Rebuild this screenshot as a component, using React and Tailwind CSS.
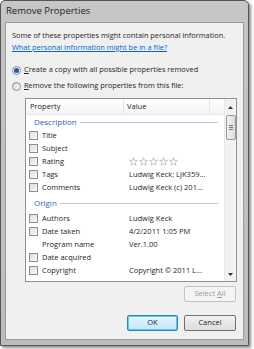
import React from 'react';

const font = { fontFamily: '"Open Sans", "Liberation Sans", sans-serif' };

const Check = () => (
  <span className="w-[9px] h-[9px] border border-[#8e8f8f] bg-gradient-to-br from-[#dcdcdc] to-[#fbfbfb] shrink-0" />
);

const Star = () => (
  <svg width="9" height="9" viewBox="0 0 10 10" className="shrink-0">
    <path d="M5 0.6 L6.2 3.7 L9.5 3.8 L6.9 5.9 L7.8 9.2 L5 7.3 L2.2 9.2 L3.1 5.9 L0.5 3.8 L3.8 3.7 Z" fill="#fbfbfb" stroke="#b4b4b4" strokeWidth="0.8" />
  </svg>
);

const rows1 = [
  { name: 'Title', value: '' },
  { name: 'Subject', value: '' },
  { name: 'Rating', value: 'stars' },
  { name: 'Tags', value: 'Ludwig Keck; LJK359...' },
  { name: 'Comments', value: 'Ludwig Keck (c) 201...' },
];

const rows2 = [
  { name: 'Authors', value: 'Ludwig Keck', check: true },
  { name: 'Date taken', value: '4/2/2011 1:05 PM', check: true },
  { name: 'Program name', value: 'Ver.1.00', check: false },
  { name: 'Date acquired', value: '', check: true },
  { name: 'Copyright', value: 'Copyright © 2011 L...', check: true },
];

const Row = ({ r }) => (
  <div className="h-[13px] flex items-center text-[7.5px] text-[#1e1e1e]">
    <div className="w-[16px] pl-[3px] flex items-center">{r.check !== false && <Check />}</div>
    <div className="w-[87px] truncate">{r.name}</div>
    <div className="flex-1 flex items-center gap-[1px]">
      {r.value === 'stars' ? (
        <>
          <Star /><Star /><Star /><Star /><Star />
        </>
      ) : (
        r.value
      )}
    </div>
  </div>
);

const Group = ({ title }) => (
  <div className="h-[14px] flex items-center pl-[8px] pr-[6px] gap-[3px]">
    <span className="text-[8px] text-[#2f5fb5]">{title}</span>
    <span className="flex-1 h-px bg-[#b9c7e0]" />
  </div>
);

export default function App() {
  return (
    <div className="w-[254px] h-[349px] bg-white" style={font}>
      <div className="w-[249px] h-[346px] rounded-t-[5px] border border-[#555] bg-gradient-to-b from-[#c6c6c6] to-[#bcbcbc] shadow-[2px_2px_3px_rgba(0,0,0,0.45)] flex flex-col">
        <div className="h-[21px] flex items-center pl-[5px] text-[9.5px] text-[#1e1e1e]">Remove Properties</div>
        <div className="mx-[4px] flex-1 mb-[5px] border border-[#9a9a9a] bg-[#f0f0f0] flex flex-col pt-[6px] pl-[6px] pr-[6px]">
          <div className="text-[7.4px] leading-[12px] text-[#1e1e1e]">Some of these properties might contain personal information.</div>
          <div className="text-[7.4px] leading-[12px] text-[#0066cc] underline">What personal information might be in a file?</div>

          <div className="mt-[10px] flex items-center h-[14px] gap-[3px] text-[7.4px] text-[#1e1e1e]">
            <span className="w-[9px] h-[9px] rounded-full border border-[#8c8c8c] bg-[#f4f4f4] flex items-center justify-center">
              <span className="w-[5px] h-[5px] rounded-full bg-[#1d58b8]" />
            </span>
            <span><span className="underline">C</span>reate a copy with all possible properties removed</span>
          </div>
          <div className="mt-[2px] flex items-center h-[14px] gap-[3px] text-[7.4px] text-[#1e1e1e]">
            <span className="w-[9px] h-[9px] rounded-full border border-[#8c8c8c] bg-gradient-to-br from-[#d8d8d8] to-[#fafafa]" />
            <span><span className="underline">R</span>emove the following properties from this file:</span>
          </div>

          <div className="mt-[5px] ml-[13px] w-[212px] h-[184px] border border-[#8e9196] bg-white flex">
            <div className="flex-1 flex flex-col">
              <div className="h-[16px] flex items-center text-[7.5px] text-[#1e1e1e] bg-gradient-to-b from-white to-[#f3f4f6] border-b border-[#e3e6eb]">
                <div className="w-[98px] pl-[4px] h-full flex items-center border-r border-[#e3e6eb]">Property</div>
                <div className="w-[86px] pl-[3px] h-full flex items-center border-r border-[#e3e6eb]">Value</div>
                <div className="flex-1" />
              </div>
              <Group title="Description" />
              {rows1.map((r) => <Row key={r.name} r={r} />)}
              <div className="h-[2px]" />
              <Group title="Origin" />
              <div className="h-[2px]" />
              {rows2.map((r) => <Row key={r.name} r={r} />)}
            </div>
            <div className="w-[12px] bg-[#f2f2f2] border-l border-[#e8e8e8] flex flex-col items-center">
              <div className="h-[16px] flex items-center justify-center">
                <svg width="5" height="3" viewBox="0 0 5 3"><path d="M0 3 L2.5 0 L5 3 Z" fill="#333" /></svg>
              </div>
              <div className="w-[10px] h-[25px] rounded-[2px] border border-[#999] bg-gradient-to-r from-[#f2f2f2] to-[#dcdcdc] flex flex-col items-center justify-center gap-[1px]">
                <span className="w-[4px] h-px bg-[#777]" />
                <span className="w-[4px] h-px bg-[#777]" />
                <span className="w-[4px] h-px bg-[#777]" />
              </div>
              <div className="flex-1" />
              <div className="h-[14px] flex items-center justify-center">
                <svg width="5" height="3" viewBox="0 0 5 3"><path d="M0 0 L5 0 L2.5 3 Z" fill="#333" /></svg>
              </div>
            </div>
          </div>

          <div className="mt-[4px] flex justify-end pr-[1px]">
            <div className="w-[52px] h-[16px] rounded-[2px] border border-[#c3c3c3] bg-[#f4f4f4] text-[7.5px] text-[#9a9a9a] flex items-center justify-center">
              Select <span className="underline ml-[2px]">A</span>ll
            </div>
          </div>

          <div className="mt-[13px] flex justify-end gap-[6px] pr-[1px]">
            <div className="w-[51px] h-[16px] rounded-[2px] border border-[#3c7fb1] bg-gradient-to-b from-[#eaf6fd] to-[#bee6fd] text-[7.5px] text-[#1e1e1e] flex items-center justify-center shadow-[inset_0_0_0_1px_#48d0f8]">
              OK
            </div>
            <div className="w-[52px] h-[16px] rounded-[2px] border border-[#707070] bg-gradient-to-b from-[#f2f2f2] to-[#dcdcdc] text-[7.5px] text-[#1e1e1e] flex items-center justify-center">
              Cancel
            </div>
          </div>
        </div>
      </div>
    </div>
  );
}
